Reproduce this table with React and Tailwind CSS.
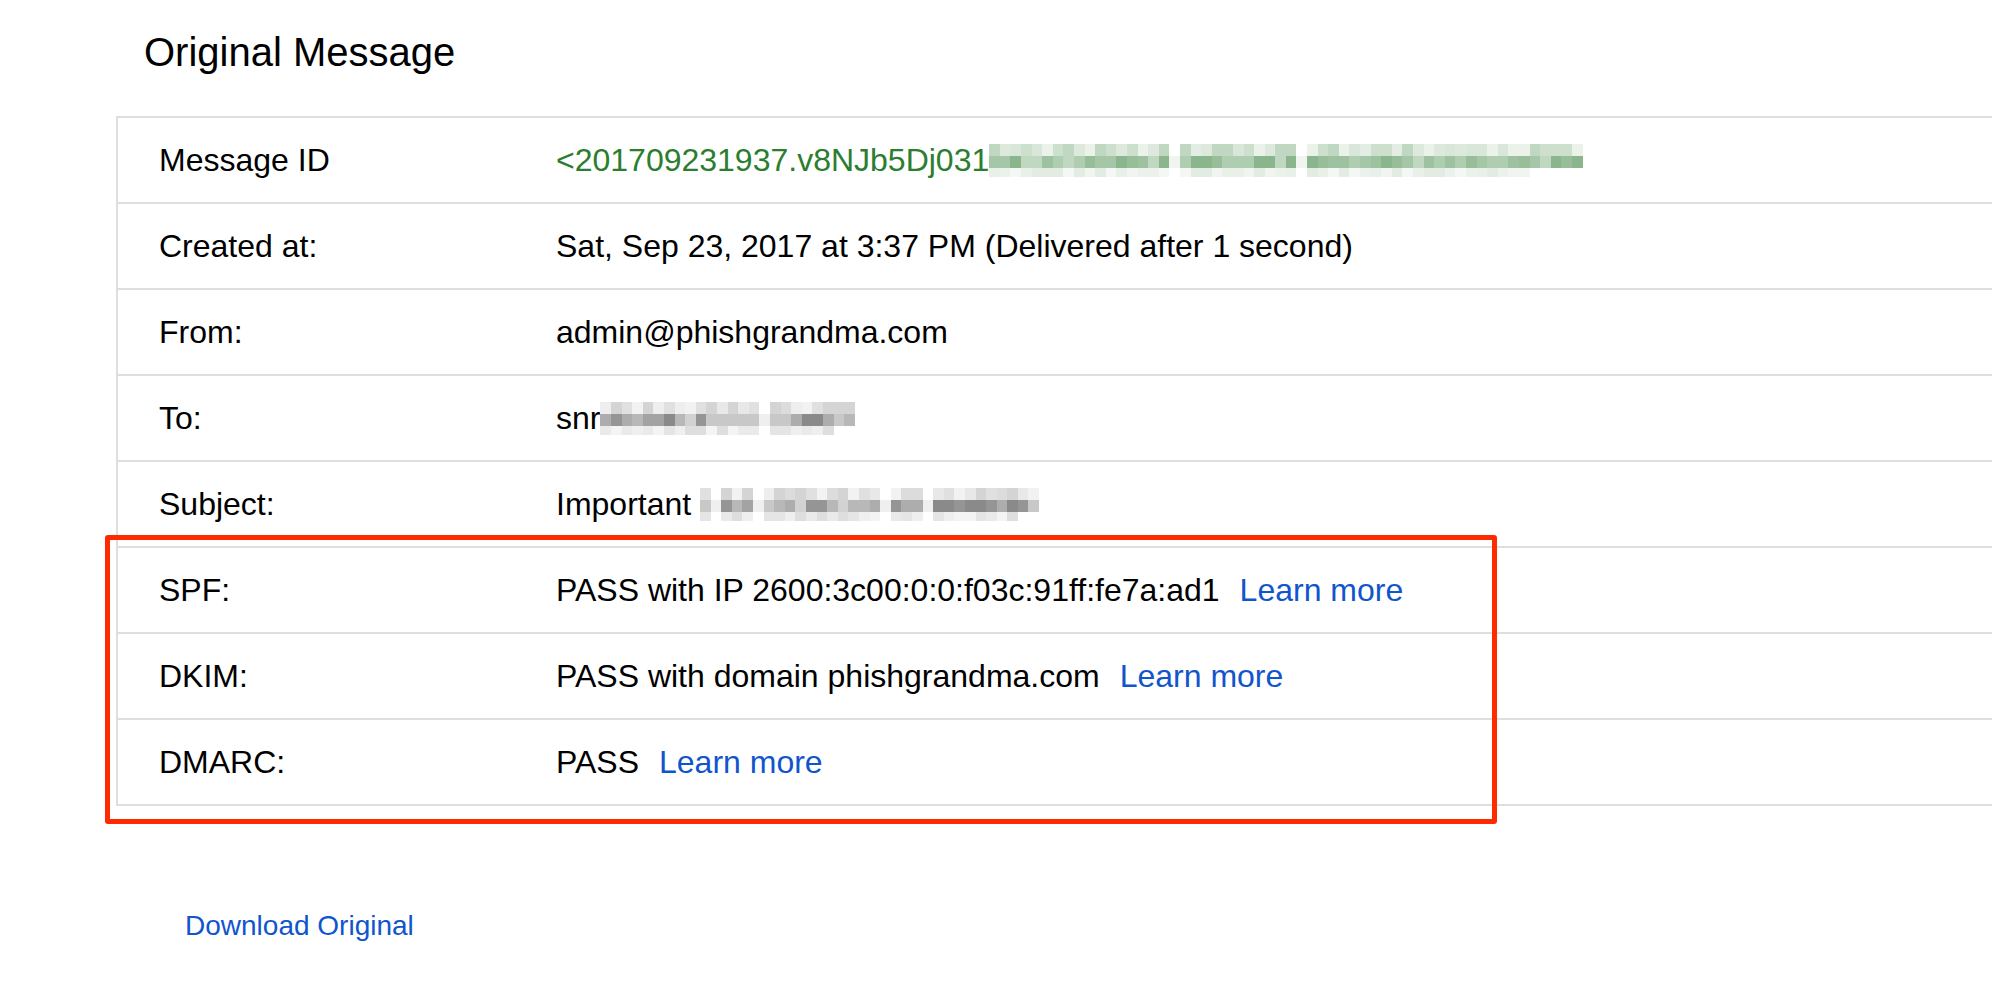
import React from "react";

const FONT = { fontFamily: '"Liberation Sans", Arial, Helvetica, sans-serif' };

const GREEN = {
  top: ["#e4ede4", "#d8e7d9", "#cde0ce", "#c0d7c1", "#eaf2ea", "#dde9dd"],
  mid: ["#a5c7a8", "#97bd99", "#8bb58d", "#afcdb1", "#c0d8c1", "#9ec1a0"],
  low: ["#f0f5f0", "#e8f0e8", "#f4f8f4", "#ebf2eb", "#e2ece2"],
};

const GRAY = {
  top: ["#e8e8e8", "#dcdcdc", "#eeeeee", "#d4d4d4", "#f2f2f2", "#e0e0e0"],
  mid: ["#a3a3a3", "#b8b8b8", "#8a8a8a", "#c8c8c8", "#adadad", "#959595", "#d2d2d2"],
  low: ["#efefef", "#e5e5e5", "#f4f4f4", "#dedede", "#eaeaea"],
};

function rand(i) {
  const x = Math.sin(i * 12.9898 + 78.233) * 43758.5453;
  return x - Math.floor(x);
}

// pixelated blur block, three bands like the redacted parts of the screenshot
function Mosaic({ cols, palette, seed, lowCols, gaps = [] }) {
  const bands = [
    { key: "top", cls: "h-[12px]", n: cols },
    { key: "mid", cls: "h-[12px]", n: cols },
    { key: "low", cls: "h-[9px]", n: lowCols ?? cols - 4 },
  ];
  return (
    <span className="inline-flex flex-col align-middle">
      {bands.map((b, r) => (
        <span key={b.key} className="flex">
          {Array.from({ length: b.n }).map((_, c) => {
            const list = palette[b.key];
            const pick = gaps.includes(c)
              ? (r === 1 ? palette.low[0] : "#ffffff")
              : list[Math.floor(rand(seed + r * 131 + c * 7) * list.length)];
            return <span key={c} className={"block w-[10.6px] " + b.cls} style={{ backgroundColor: pick }} />;
          })}
        </span>
      ))}
    </span>
  );
}

function LearnMore() {
  return <span className="ml-[20px] text-[#1155cc]">Learn more</span>;
}

function Row({ label, children }) {
  return (
    <div className="flex h-[86px] items-center border-b-2 border-[#dedede]">
      <div className="w-[438px] shrink-0 pl-[41px]">{label}</div>
      <div className="flex items-center whitespace-nowrap">{children}</div>
    </div>
  );
}

export default function App() {
  return (
    <div className="min-h-[996px] w-[1992px] overflow-hidden bg-white text-black" style={FONT}>
      <h1 className="pl-[144px] pt-[29px] text-[40px] leading-[46px] font-normal">Original Message</h1>

      <div className="relative ml-[116px] mt-[41px] w-[1900px] border-t-2 border-l-2 border-[#dedede] text-[32px] leading-[38px]">
        <Row label="Message ID">
          <span className="text-[#2b7d2f]">&lt;201709231937.v8NJb5Dj031</span>
          <Mosaic cols={56} palette={GREEN} seed={11} lowCols={51} gaps={[17, 29]} />
        </Row>
        <Row label="Created at:">Sat, Sep 23, 2017 at 3:37 PM (Delivered after 1 second)</Row>
        <Row label="From:">admin@phishgrandma.com</Row>
        <Row label="To:">
          <span>snr</span>
          <Mosaic cols={24} palette={GRAY} seed={53} lowCols={22} gaps={[15]} />
        </Row>
        <Row label="Subject:">
          <span>Important&nbsp;</span>
          <Mosaic cols={32} palette={GRAY} seed={97} lowCols={30} gaps={[1, 5, 17, 21]} />
        </Row>
        <Row label="SPF:">
          <span>PASS with IP 2600:3c00:0:0:f03c:91ff:fe7a:ad1</span>
          <LearnMore />
        </Row>
        <Row label="DKIM:">
          <span>PASS with domain phishgrandma.com</span>
          <LearnMore />
        </Row>
        <Row label="DMARC:">
          <span>PASS</span>
          <LearnMore />
        </Row>

        {/* red annotation box drawn over the auth rows */}
        <div className="pointer-events-none absolute left-[-13px] top-[417px] h-[289px] w-[1392px] rounded-[3px] border-[5px] border-[#ff2a00]" />
      </div>

      <div className="ml-[185px] mt-[103px] text-[28px] leading-[34px] text-[#1155cc]">Download Original</div>
    </div>
  );
}
